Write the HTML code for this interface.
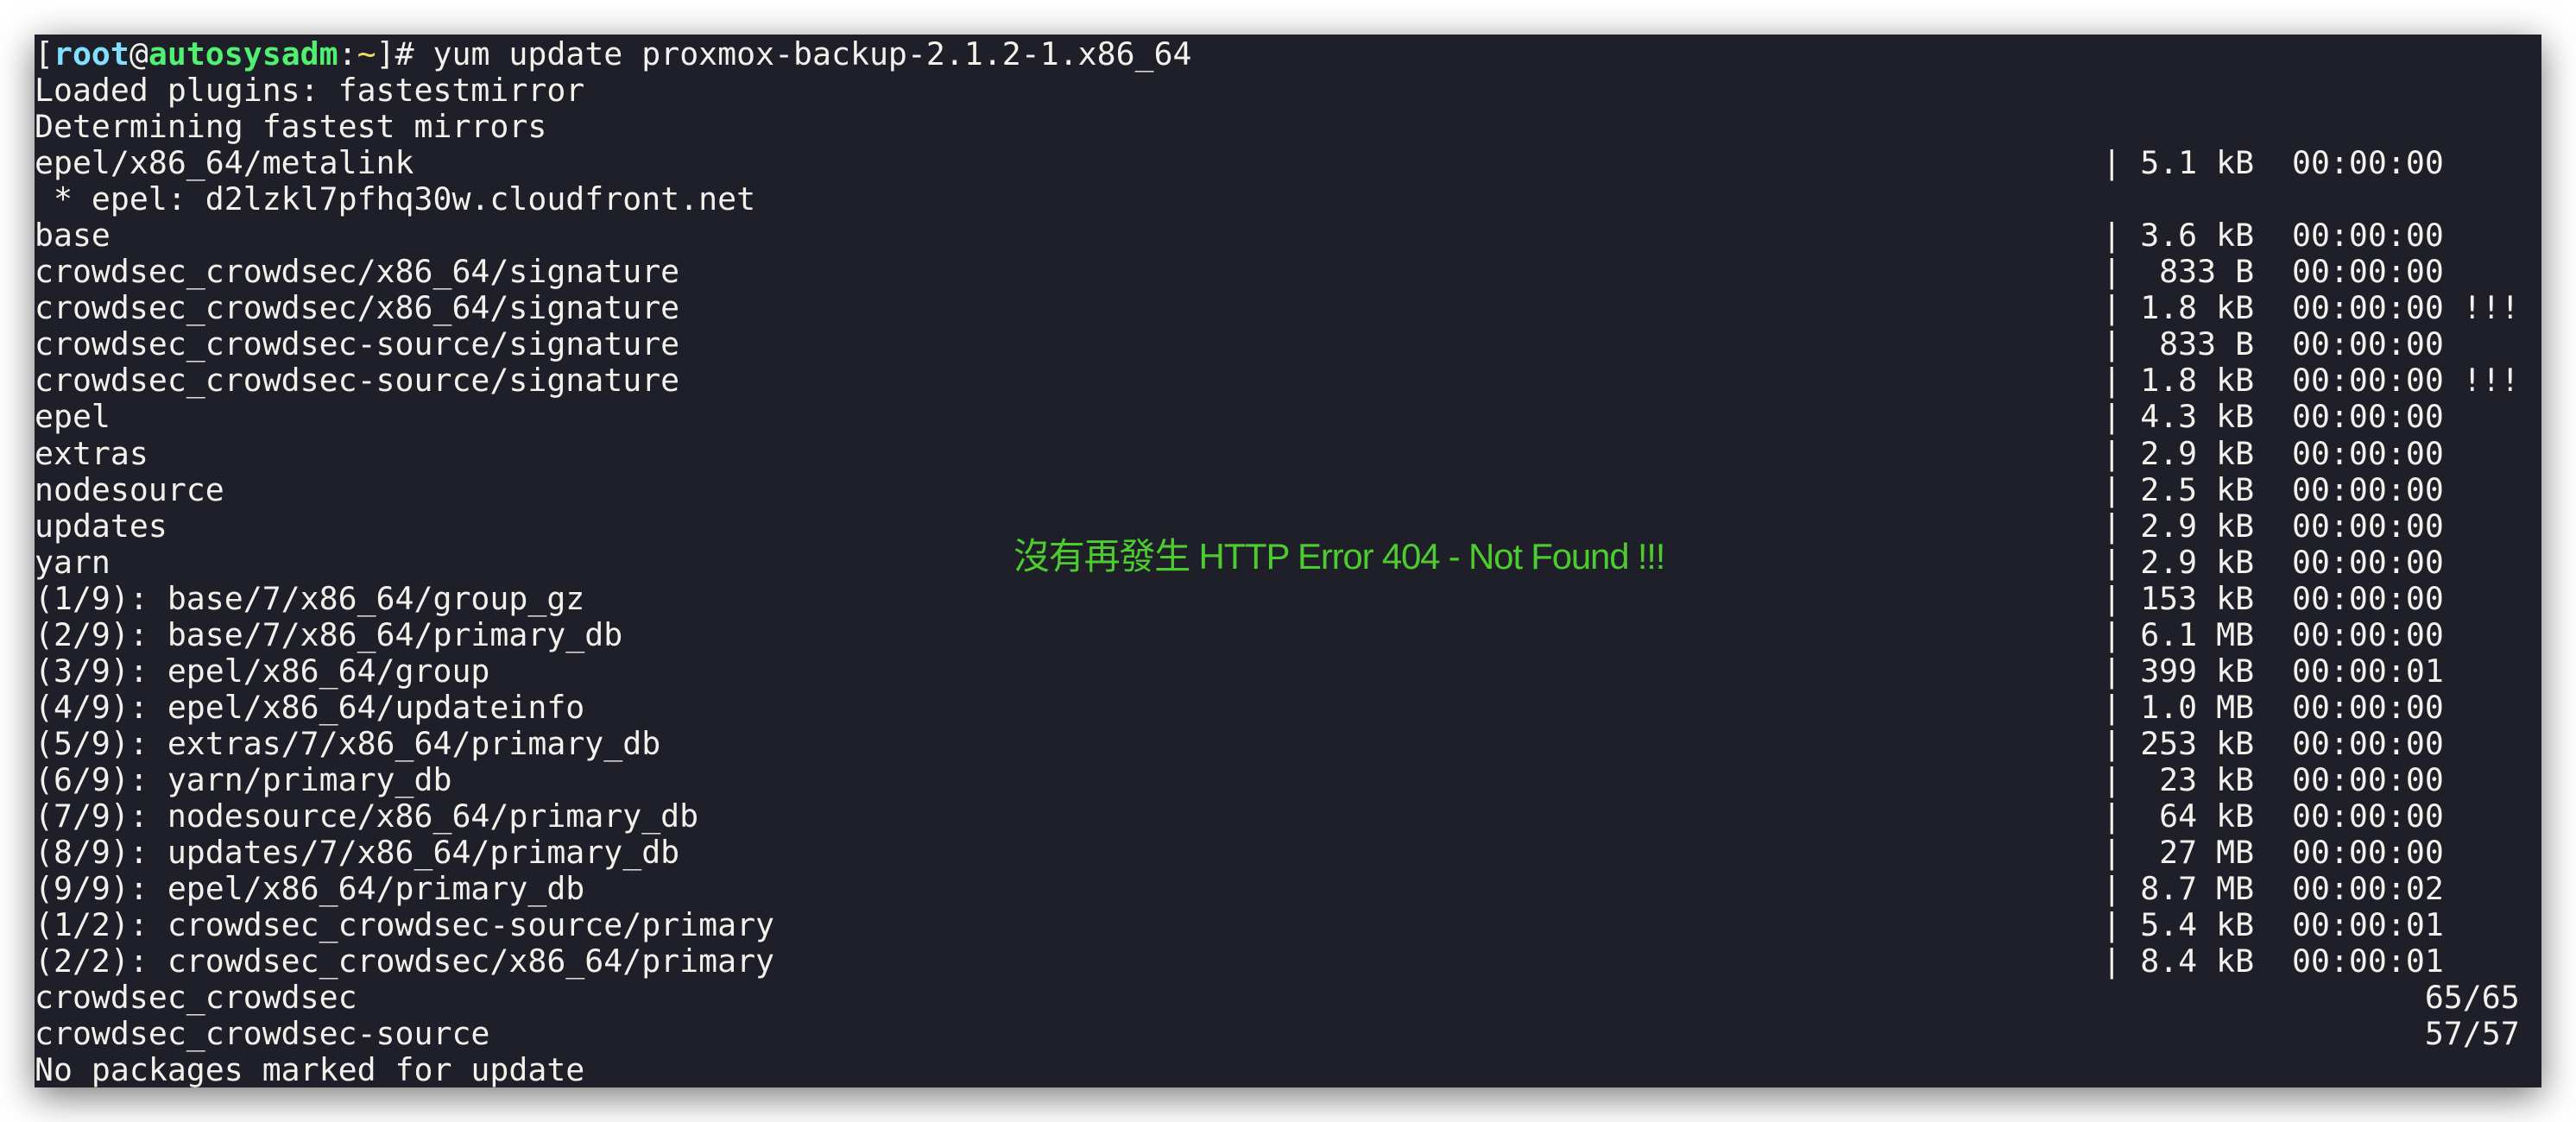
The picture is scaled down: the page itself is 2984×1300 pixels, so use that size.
<!DOCTYPE html>
<html><head><meta charset="utf-8"><style>
html,body{margin:0;padding:0;background:#fff;width:2984px;height:1300px;overflow:hidden;}
.term{position:absolute;left:40px;top:40px;width:2904px;height:1220px;background:#1f1f29;box-shadow:0 10px 40px rgba(0,0,0,0.55);}
pre{position:absolute;left:0;top:2px;margin:0;font-family:"DejaVu Sans Mono","Liberation Mono",monospace;font-size:36.5px;line-height:42.05px;color:#f2f2ec;white-space:pre;}
.c{color:#7fe0ff;font-weight:bold}.g{color:#50f070;font-weight:bold}.y{color:#f0e060}
.note{position:absolute;left:1174px;top:611px;font-family:"Liberation Sans","Noto Sans CJK TC",sans-serif;font-size:42px;color:#4ccc2e;white-space:nowrap;letter-spacing:-1.2px;}
</style></head><body>
<div class="term">
<pre>[<span class="c">root</span>@<span class="g">autosysadm</span>:<span class="y">~</span>]# yum update proxmox-backup-2.1.2-1.x86_64
Loaded plugins: fastestmirror
Determining fastest mirrors
epel/x86_64/metalink                                                                                         | 5.1 kB  00:00:00
 * epel: d2lzkl7pfhq30w.cloudfront.net
base                                                                                                         | 3.6 kB  00:00:00
crowdsec_crowdsec/x86_64/signature                                                                           |  833 B  00:00:00
crowdsec_crowdsec/x86_64/signature                                                                           | 1.8 kB  00:00:00 !!!
crowdsec_crowdsec-source/signature                                                                           |  833 B  00:00:00
crowdsec_crowdsec-source/signature                                                                           | 1.8 kB  00:00:00 !!!
epel                                                                                                         | 4.3 kB  00:00:00
extras                                                                                                       | 2.9 kB  00:00:00
nodesource                                                                                                   | 2.5 kB  00:00:00
updates                                                                                                      | 2.9 kB  00:00:00
yarn                                                                                                         | 2.9 kB  00:00:00
(1/9): base/7/x86_64/group_gz                                                                                | 153 kB  00:00:00
(2/9): base/7/x86_64/primary_db                                                                              | 6.1 MB  00:00:00
(3/9): epel/x86_64/group                                                                                     | 399 kB  00:00:01
(4/9): epel/x86_64/updateinfo                                                                                | 1.0 MB  00:00:00
(5/9): extras/7/x86_64/primary_db                                                                            | 253 kB  00:00:00
(6/9): yarn/primary_db                                                                                       |  23 kB  00:00:00
(7/9): nodesource/x86_64/primary_db                                                                          |  64 kB  00:00:00
(8/9): updates/7/x86_64/primary_db                                                                           |  27 MB  00:00:00
(9/9): epel/x86_64/primary_db                                                                                | 8.7 MB  00:00:02
(1/2): crowdsec_crowdsec-source/primary                                                                      | 5.4 kB  00:00:01
(2/2): crowdsec_crowdsec/x86_64/primary                                                                      | 8.4 kB  00:00:01
crowdsec_crowdsec                                                                                                             65/65
crowdsec_crowdsec-source                                                                                                      57/57
No packages marked for update</pre>
</div>
<div class="note">沒有再發生 HTTP Error 404 - Not Found !!!</div>
</body></html>
